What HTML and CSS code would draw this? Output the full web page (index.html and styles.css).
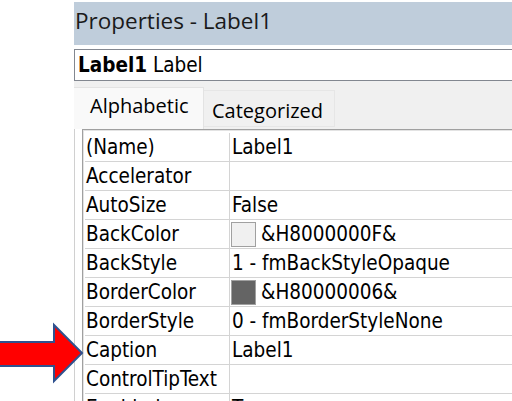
FILE: index.html
```html
<!DOCTYPE html>
<html>
<head>
<meta charset="utf-8">
<link rel="stylesheet" href="styles.css">
</head>
<body>
<div class="window">
  <div class="titlebar">Properties - Label1</div>
  <div class="namebox"><b>Label1</b> Label</div>
  <div class="tabstrip">
    <div class="tab active">Alphabetic</div>
    <div class="tab">Categorized</div>
  </div>
  <div class="page">
    <div class="grid">
      <div class="row"><div class="k">(Name)</div><div class="v">Label1</div></div>
      <div class="row"><div class="k">Accelerator</div><div class="v"></div></div>
      <div class="row"><div class="k">AutoSize</div><div class="v">False</div></div>
      <div class="row"><div class="k">BackColor</div><div class="v"><span class="sw light"></span>&amp;H8000000F&amp;</div></div>
      <div class="row"><div class="k">BackStyle</div><div class="v">1 - fmBackStyleOpaque</div></div>
      <div class="row"><div class="k">BorderColor</div><div class="v"><span class="sw dark"></span>&amp;H80000006&amp;</div></div>
      <div class="row"><div class="k">BorderStyle</div><div class="v">0 - fmBorderStyleNone</div></div>
      <div class="row"><div class="k">Caption</div><div class="v">Label1</div></div>
      <div class="row"><div class="k">ControlTipText</div><div class="v"></div></div>
      <div class="row"><div class="k">Enabled</div><div class="v">True</div></div>
    </div>
  </div>
</div>
<svg class="arrow" width="90" height="64" viewBox="0 322 90 64">
  <polygon points="-2,342 54,342 54,325 82,353 54,381 54,366 -2,366" fill="#ff0000" stroke="#2f528f" stroke-width="2" stroke-linejoin="miter"/>
</svg>
</body>
</html>
```
FILE: styles.css
```css
html, body {
  margin: 0;
  padding: 0;
  background: #ffffff;
  overflow: hidden;
  width: 512px;
  height: 401px;
}
.window {
  margin-left: 74px;
  padding-top: 2px;
  width: 460px;
}
.titlebar {
  height: 43px;
  background: #bfcddb;
  font-family: "Open Sans", sans-serif;
  font-size: 22.5px;
  line-height: 38px;
  padding-left: 1px;
  color: #1a1a1a;
  box-sizing: border-box;
}
.namebox {
  margin-top: 4px;
  height: 32px;
  border: 1px solid #828790;
  box-sizing: border-box;
  font-family: "DejaVu Sans Condensed", "DejaVu Sans", sans-serif;
  font-size: 20.5px;
  line-height: 30px;
  padding-left: 3px;
  color: #000;
  white-space: nowrap;
}
.namebox b { font-weight: bold; }
.tabstrip {
  background: #f0f0f0;
  height: 48px;
  display: flex;
  align-items: flex-end;
  box-sizing: border-box;
}
.tab {
  font-family: "Open Sans", sans-serif;
  font-size: 20px;
  color: #000;
  box-sizing: border-box;
  white-space: nowrap;
}
.tab.active {
  width: 130px;
  height: 42px;
  background: #f9f9f9;
  border-top: 1px solid #e3e3e3;
  border-right: 1px solid #e3e3e3;
  padding-left: 16px;
  line-height: 36px;
}
.tab:not(.active) {
  width: 131px;
  height: 37px;
  margin-bottom: 2px;
  border: 1px solid #e6e6e6;
  border-left: none;
  padding-left: 8px;
  line-height: 39px;
}
.page {
  background: #ffffff;
  border-left: 1px solid #d0d0d0;
  padding-left: 7px;
}
.grid {
  border-top: 1px solid #a0a0a0;
  border-left: 1px solid #a0a0a0;
  padding-top: 3px;
  padding-left: 2px;
  box-shadow: inset 1px 1px 0 #e3e3e3;
  font-family: "DejaVu Sans Condensed", "DejaVu Sans", sans-serif;
  font-size: 20.5px;
  color: #000;
}
.row {
  display: flex;
  height: 29px;
  border-bottom: 1px solid #d4d4d4;
  box-sizing: border-box;
}
.k {
  width: 143px;
  border-right: 1px solid #d4d4d4;
  padding-left: 1px;
  line-height: 28px;
  white-space: nowrap;
  overflow: hidden;
}
.v {
  flex: 1;
  padding-left: 2px;
  line-height: 28px;
  white-space: nowrap;
  display: flex;
  align-items: center;
}
.v-wide { letter-spacing: 0.2px; }
.sw {
  width: 25px;
  height: 25px;
  box-sizing: border-box;
  border: 1px solid #a0a0a0;
  margin-right: 5px;
  margin-left: -1px;
}
.sw.light { background: #f0f0f0; }
.sw.dark { background: #646464; }
.arrow {
  position: absolute;
  left: 0;
  top: 322px;
}
```
